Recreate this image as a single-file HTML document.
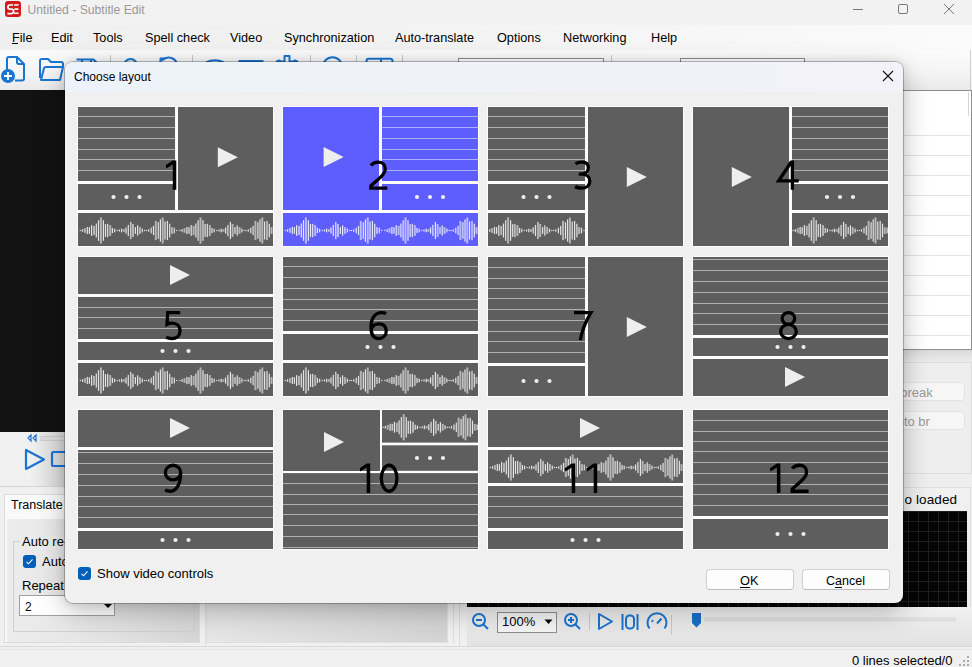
<!DOCTYPE html>
<html><head><meta charset="utf-8">
<style>
*{margin:0;padding:0;box-sizing:border-box}
html,body{width:972px;height:667px;overflow:hidden;background:#f0f0f0;font-family:"Liberation Sans",sans-serif;color:#000}
.a{position:absolute}
.t{position:absolute;white-space:nowrap;font-size:12px;line-height:14px}
.cell{position:absolute;width:197px;height:141px}
.cell svg{position:absolute;left:0;top:0;display:block}
.num{position:absolute;left:0;top:0;width:197px;height:141px;line-height:141px;text-align:center;font-size:41px;color:#000}
.sep{position:absolute;width:1px;background:#c8c8c8}
</style></head><body>
<!-- title bar -->
<div class="a" style="left:0;top:0;width:972px;height:25px;background:#f2f2f2"></div>
<svg class="a" style="left:5px;top:1px" width="16" height="16"><rect x="0" y="0" width="16" height="16" rx="3" fill="#d01c1f"/><path d="M8 4H5a2.1 2.1 0 0 0 0 4.2h1.4a2.2 2.2 0 0 1 0 4.4H2.4" fill="none" stroke="#fff" stroke-width="1.7"/><path d="M8.6 3.2h5.4l-0.8 1.6H9.4zM9.4 7.3h4v1.6h-4zM9.4 11.4h3.8l0.8 1.6H8.6z" fill="#fff"/></svg>
<div class="t" style="left:27.5px;top:3px;color:#999;font-size:12.2px">Untitled - Subtitle Edit</div>
<div class="a" style="left:853px;top:9px;width:10px;height:1px;background:#777"></div>
<div class="a" style="left:898px;top:4px;width:10px;height:10px;border:1px solid #777;border-radius:2px"></div>
<svg class="a" style="left:943px;top:3px" width="12" height="12"><path d="M1 1L11 11M11 1L1 11" stroke="#777" stroke-width="1"/></svg>

<!-- menu bar -->
<div class="a" style="left:0;top:25px;width:972px;height:25px;background:linear-gradient(90deg,#efefef,#f2f2f2 40%,#f7f7f7 75%,#fbfbfb)"></div>
<div class="t" style="left:12px;top:31px;font-size:12.7px">File</div>
<div class="a" style="left:12px;top:43px;width:6px;height:1px;background:#000"></div>
<div class="t" style="left:51px;top:31px;font-size:12.7px">Edit</div>
<div class="t" style="left:93px;top:31px;font-size:12.7px">Tools</div>
<div class="t" style="left:145px;top:31px;font-size:12.7px">Spell check</div>
<div class="t" style="left:230px;top:31px;font-size:12.7px">Video</div>
<div class="t" style="left:284px;top:31px;font-size:12.7px">Synchronization</div>
<div class="t" style="left:395px;top:31px;font-size:12.7px">Auto-translate</div>
<div class="t" style="left:497px;top:31px;font-size:12.7px">Options</div>
<div class="t" style="left:563px;top:31px;font-size:12.7px">Networking</div>
<div class="t" style="left:651px;top:31px;font-size:12.7px">Help</div>

<!-- toolbar -->
<div class="a" style="left:0;top:50px;width:972px;height:40px;background:linear-gradient(#fbfbfb,#f4f4f4 60%,#e9e9e9)"></div>
<svg class="a" style="left:0;top:50px" width="460" height="40">
 <g fill="none" stroke="#1a74d2" stroke-width="2" stroke-linejoin="round">
  <path d="M7 22V9a2 2 0 0 1 2-2h8l7 7v14.5a2 2 0 0 1-2 2h-7"/><path d="M17 7v5a2 2 0 0 0 2 2h5"/>
  <path d="M40 28V11a2 2 0 0 1 2-2h6l3 3h10a2 2 0 0 1 2 2v3"/><path d="M41 30l3-12a2 2 0 0 1 2-1h17l-3 13z"/>
  <path d="M76.5 9.5h17l3.5 3.5M82 9.5v4M91 9.5v4"/>
  <circle cx="130.6" cy="15.5" r="6.5"/>
  <path d="M160.5 13V8.5H166M162 10.5a9 9 0 0 1 15 3"/>
  <path d="M206 12.5a20 20 0 0 1 18 0"/>
  <path d="M238.5 11h25"/>
  <path d="M276 12l3-1.5 2 1h3.5v-5.5h5v5.5h3.5l2-1 3 1.5"/>
  <circle cx="332.5" cy="16.8" r="9.6"/>
  <path d="M366.5 14v-3a2.2 2.2 0 0 1 2.2-2.2h21.6a2.2 2.2 0 0 1 2.2 2.2v3M381 9v5"/>
 </g>
 <circle cx="8" cy="26" r="7" fill="#1a74d2"/>
 <path d="M8 22v8M4 26h8" stroke="#fff" stroke-width="1.8"/>
</svg>
<div class="sep" style="left:110px;top:55px;height:30px"></div>
<div class="sep" style="left:192px;top:55px;height:30px"></div>
<div class="sep" style="left:310px;top:55px;height:30px"></div>
<div class="sep" style="left:356px;top:55px;height:30px"></div>
<div class="sep" style="left:402px;top:55px;height:30px"></div>
<div class="a" style="left:458px;top:58px;width:146px;height:22px;border:1px solid #8a8a8a;background:#fff"></div>
<div class="sep" style="left:611px;top:55px;height:30px"></div>
<div class="a" style="left:680px;top:58px;width:125px;height:22px;border:1px solid #8a8a8a;background:#fff"></div>

<div class="a" style="left:970px;top:50px;width:1px;height:40px;background:#d0d0d0"></div>
<!-- video panel -->
<div class="a" style="left:0;top:90px;width:470px;height:342px;background:#121212"></div>
<!-- right subtitle list -->
<div class="a" style="left:470px;top:90px;width:501.5px;height:260px;background:linear-gradient(90deg,#eaeaea,#fff 40%,#fff);border:1px solid #8e8e8e;border-right:1.5px solid #8e8e8e"></div>
<div class="a" style="left:470px;top:135px;width:500px;height:214px;background:repeating-linear-gradient(#e3e3e3 0,#e3e3e3 1px,transparent 1px,transparent 20px)"></div>
<div class="a" style="left:968px;top:92px;width:1px;height:24px;background:#d6d6d6"></div>

<!-- right edit area -->
<div class="a" style="left:470px;top:350px;width:502px;height:12px;background:linear-gradient(#d9d9d9,#ececec)"></div>
<div class="a" style="left:470px;top:362px;width:502px;height:125px;background:#eeeeee"></div>
<div class="a" style="left:470px;top:362px;width:502px;height:112px;border:1px solid #dcdcdc"></div>
<div class="a" style="left:880px;top:382px;width:85px;height:19px;background:#f6f6f6;border:1px solid #e3e3e3;border-radius:4px"></div>
<div class="t" style="left:872px;top:386px;color:#9a9a9a;font-size:13px">Line break</div>
<div class="a" style="left:880px;top:411px;width:85px;height:19px;background:#f6f6f6;border:1px solid #e3e3e3;border-radius:4px"></div>
<div class="t" style="left:888px;top:415px;color:#9a9a9a;font-size:13px">Auto br</div>

<!-- left controls under video -->
<div class="a" style="left:0;top:432px;width:470px;height:55px;background:linear-gradient(90deg,#f0f0f0,#f0f0f0 30px,#d8d8d8 62px)"></div>
<svg class="a" style="left:0;top:431px" width="70" height="56">
 <path d="M31 4l-3 3 3 3zM36 4l-3 3 3 3z" fill="none" stroke="#1a74d2" stroke-width="1.2"/>
 <rect x="41" y="5.5" width="40" height="4" fill="#dcdcdc" stroke="#bbb" stroke-width="0.6"/>
 <path d="M26 19v19l18-9.5z" fill="none" stroke="#1a74d2" stroke-width="2.2" stroke-linejoin="round"/>
 <rect x="52" y="21" width="14" height="14" rx="1.5" fill="none" stroke="#1a74d2" stroke-width="2.2"/>
</svg>
<div class="a" style="left:0;top:486px;width:470px;height:1px;background:#d5d5d5"></div>

<!-- tab -->
<div class="a" style="left:0;top:487px;width:205px;height:160px;background:#f0f0f0"></div>
<div class="a" style="left:4px;top:494px;width:196px;height:26px;background:#fafafa;border:1px solid #dcdcdc;border-bottom:none"></div>
<div class="t" style="left:11px;top:498px;font-size:12.5px">Translate</div>
<div class="a" style="left:4px;top:519px;width:196px;height:124px;background:#fafafa;border:1px solid #dcdcdc;border-top:none"></div>
<div class="a" style="left:7px;top:519px;width:192px;height:123px;background:linear-gradient(90deg,#ececec,#e6e6e6 40%,#d6d6d6)"></div>
<div class="a" style="left:13px;top:541px;width:182px;height:91px;border:1px solid #d0d0d0"></div>
<div class="t" style="left:20px;top:535px;background:#ebebeb;padding:0 2px;font-size:13px">Auto re-translate</div>
<div class="a" style="left:23px;top:555px;width:13px;height:13px;background:#005fb8;border-radius:3px"></div>
<svg class="a" style="left:23px;top:555px" width="13" height="13"><path d="M3.5 6.8l2 2 4-4.5" fill="none" stroke="#fff" stroke-width="1.1"/></svg>
<div class="t" style="left:42px;top:555px;font-size:13px">Auto translate</div>
<div class="t" style="left:22px;top:579px;font-size:13px">Repeat</div>
<div class="a" style="left:19px;top:595px;width:96px;height:21px;background:#fff;border:1px solid #a0a0a0"></div>
<div class="t" style="left:25px;top:600px">2</div>
<svg class="a" style="left:103px;top:603px" width="10" height="6"><path d="M1 1h8l-4 4z" fill="#000"/></svg>
<div class="a" style="left:205px;top:487px;width:262px;height:160px;background:#f0f0f0;border-left:1px solid #dedede"></div>
<div class="a" style="left:206px;top:520px;width:242px;height:123px;background:linear-gradient(90deg,#e6e6e6,#d4d4d4);border:1px solid #e0e0e0"></div>
<div class="a" style="left:453px;top:487px;width:1px;height:156px;background:#dcdcdc"></div>
<div class="a" style="left:459px;top:487px;width:1px;height:160px;background:#dcdcdc"></div>

<!-- waveform area -->
<div class="a" style="left:467px;top:487px;width:505px;height:24px;background:#f0f0f0"></div>
<div class="a" style="left:470px;top:487px;width:501px;height:120px;border:1px solid #dedede;border-bottom:none"></div>
<div class="t" style="left:904.5px;top:493px;font-size:13.5px;letter-spacing:0.1px">o loaded</div>
<div class="a" style="left:467px;top:511px;width:500px;height:96px;background-color:#050505;background-image:linear-gradient(90deg,#1e1e1e 1px,transparent 1px),linear-gradient(#1e1e1e 1px,transparent 1px);background-size:10px 10px;background-position:1px 0px"></div>
<div class="a" style="left:467px;top:607px;width:505px;height:40px;background:linear-gradient(#f0f0f0,#e2e2e2)"></div>
<svg class="a" style="left:467px;top:607px" width="505" height="40">
 <g fill="none" stroke="#1a74d2" stroke-width="2">
  <circle cx="12" cy="13" r="6"/><path d="M16.5 17.5l4.5 4.5M9 13h6"/>
  <circle cx="104" cy="13" r="6"/><path d="M108.5 17.5l4.5 4.5M101 13h6M104 10v6"/>
  <path d="M132 7v15l13-7.5z" stroke-linejoin="round"/>
  <path d="M155.5 7v16M170.5 7v16"/><rect x="159" y="8.5" width="8" height="13" rx="3.5"/>
  <path d="M182.5 21.5a9.5 9.5 0 1 1 15 0M190 16.5l4.5-5M184.5 13.5l1.8 0.8"/>
 </g>
 <rect x="122" y="6" width="1" height="17" fill="#c8c8c8"/>
 <rect x="204" y="8" width="1" height="20" fill="#c8c8c8"/>
 <path d="M225 6h9v10l-4.5 4.5-4.5-4.5z" fill="#1a6fc8"/>
 <rect x="238" y="11" width="250" height="3" fill="#e0e0e0" stroke="#cfcfcf" stroke-width="0.6"/>
</svg>
<div class="a" style="left:497px;top:612px;width:60px;height:21px;background:#f4f4f4;border:1px solid #8e8e8e"></div>
<div class="t" style="left:502px;top:615px;font-size:13px">100%</div>
<svg class="a" style="left:544px;top:619px" width="9" height="6"><path d="M0.5 0.5h8l-4 4.5z" fill="#000"/></svg>

<!-- bottom lines & status bar -->
<div class="a" style="left:0;top:646px;width:972px;height:1px;background:#d9d9d9"></div>
<div class="a" style="left:0;top:649px;width:972px;height:18px;background:#f0f0f0;border-top:1px solid #e2e2e2"></div>
<div class="t" style="left:852px;top:654px;font-size:13px">0 lines selected/0</div>
<svg class="a" style="left:958px;top:655px" width="12" height="12"><g fill="#aaa"><rect x="9" y="1" width="2" height="2"/><rect x="9" y="5" width="2" height="2"/><rect x="9" y="9" width="2" height="2"/><rect x="5" y="5" width="2" height="2"/><rect x="5" y="9" width="2" height="2"/><rect x="1" y="9" width="2" height="2"/></g></svg>

<!-- dialog -->
<div class="a" style="left:65px;top:62px;width:838px;height:541px;border-radius:8px;box-shadow:0 8px 28px rgba(0,0,0,0.26),0 0 10px rgba(0,0,0,0.10),0 0 0 1px rgba(0,0,0,0.24);background:#f0f0f0;overflow:hidden">
  <div class="a" style="left:0;top:0;width:838px;height:30px;background:linear-gradient(90deg,#edf3fa,#f0f2f8 60%,#f2f2f8)"></div>
</div>
<div class="t" style="left:74px;top:70px;font-size:12px">Choose layout</div>
<svg class="a" style="left:882px;top:70px" width="12" height="12"><path d="M1 1L11 11M11 1L1 11" stroke="#111" stroke-width="1.1"/></svg>

<div class="cell" style="left:77px;top:106px"><svg width="197" height="141" viewBox="-1 -1 197 141"><rect x="-1" y="-1" width="197" height="141" fill="#fcfcfc"/><rect x="0" y="0" width="97" height="74" fill="#5e5e5e"/><rect x="0" y="9" width="97" height="1" fill="#b0b0b0"/><rect x="0" y="20" width="97" height="1" fill="#b0b0b0"/><rect x="0" y="31" width="97" height="1" fill="#b0b0b0"/><rect x="0" y="42" width="97" height="1" fill="#b0b0b0"/><rect x="0" y="52" width="97" height="1" fill="#b0b0b0"/><rect x="0" y="63" width="97" height="1" fill="#b0b0b0"/><rect x="0" y="77" width="97" height="26" fill="#5e5e5e"/><circle cx="35.5" cy="90.0" r="2.1" fill="#eeeeee"/><circle cx="48.5" cy="90.0" r="2.1" fill="#eeeeee"/><circle cx="61.5" cy="90.0" r="2.1" fill="#eeeeee"/><rect x="100" y="0" width="95" height="103" fill="#5e5e5e"/><polygon points="139.8,40.2 159.8,50.2 139.8,60.2" fill="#eeeeee"/><rect x="0" y="106" width="195" height="33" fill="#5e5e5e"/><rect x="1.70" y="122.90" width="1.2" height="1.20" fill="#e4e4e4"/><rect x="3.90" y="122.20" width="1.2" height="2.60" fill="#e4e4e4"/><rect x="5.90" y="121.20" width="2" height="4.60" fill="#b4b4b4"/><rect x="8.70" y="119.90" width="1.2" height="7.20" fill="#e4e4e4"/><rect x="10.80" y="120.20" width="1.2" height="6.60" fill="#e4e4e4"/><rect x="13.00" y="118.10" width="1.2" height="10.80" fill="#e4e4e4"/><rect x="15.00" y="118.90" width="2" height="9.20" fill="#b4b4b4"/><rect x="17.70" y="116.50" width="1.2" height="14.00" fill="#e4e4e4"/><rect x="19.90" y="113.20" width="1.2" height="20.60" fill="#e4e4e4"/><rect x="21.90" y="110.40" width="2" height="26.20" fill="#b4b4b4"/><rect x="24.80" y="113.20" width="1.2" height="20.60" fill="#e4e4e4"/><rect x="26.90" y="117.10" width="1.2" height="12.80" fill="#e4e4e4"/><rect x="29.10" y="116.80" width="1.2" height="13.40" fill="#e4e4e4"/><rect x="31.20" y="118.10" width="2" height="10.80" fill="#b4b4b4"/><rect x="33.80" y="120.90" width="1.2" height="5.20" fill="#e4e4e4"/><rect x="36.00" y="121.70" width="1.2" height="3.60" fill="#e4e4e4"/><rect x="38.50" y="122.90" width="1.2" height="1.20" fill="#e4e4e4"/><rect x="40.80" y="122.50" width="1.2" height="2.00" fill="#e4e4e4"/><rect x="43.00" y="121.70" width="1.2" height="3.60" fill="#e4e4e4"/><rect x="44.80" y="122.20" width="2" height="2.60" fill="#b4b4b4"/><rect x="47.40" y="120.40" width="1.2" height="6.20" fill="#e4e4e4"/><rect x="49.70" y="117.90" width="1.2" height="11.20" fill="#e4e4e4"/><rect x="52.20" y="114.90" width="1.2" height="17.20" fill="#e4e4e4"/><rect x="54.00" y="117.00" width="2" height="13.00" fill="#b4b4b4"/><rect x="56.80" y="120.10" width="1.2" height="6.80" fill="#e4e4e4"/><rect x="59.00" y="118.30" width="1.2" height="10.40" fill="#e4e4e4"/><rect x="60.90" y="120.10" width="2" height="6.80" fill="#b4b4b4"/><rect x="63.70" y="121.60" width="1.2" height="3.80" fill="#e4e4e4"/><rect x="66.00" y="122.90" width="1.2" height="1.20" fill="#e4e4e4"/><rect x="67.90" y="122.90" width="1.2" height="1.20" fill="#e4e4e4"/><rect x="70.10" y="122.30" width="1.2" height="2.40" fill="#e4e4e4"/><rect x="72.60" y="120.70" width="1.2" height="5.60" fill="#e4e4e4"/><rect x="74.90" y="118.90" width="1.2" height="9.20" fill="#e4e4e4"/><rect x="76.80" y="113.90" width="2" height="19.20" fill="#b4b4b4"/><rect x="79.70" y="115.20" width="1.2" height="16.60" fill="#e4e4e4"/><rect x="81.80" y="112.40" width="1.2" height="22.20" fill="#e4e4e4"/><rect x="83.70" y="110.50" width="2" height="26.00" fill="#b4b4b4"/><rect x="86.40" y="114.50" width="1.2" height="18.00" fill="#e4e4e4"/><rect x="88.80" y="113.90" width="1.2" height="19.20" fill="#e4e4e4"/><rect x="91.10" y="116.70" width="1.2" height="13.60" fill="#e4e4e4"/><rect x="92.90" y="120.10" width="2" height="6.80" fill="#b4b4b4"/><rect x="95.70" y="120.70" width="1.2" height="5.60" fill="#e4e4e4"/><rect x="98.20" y="122.90" width="1.2" height="1.20" fill="#e4e4e4"/><rect x="101.30" y="122.90" width="1.2" height="1.20" fill="#e4e4e4"/><rect x="103.50" y="122.20" width="1.2" height="2.60" fill="#e4e4e4"/><rect x="105.50" y="121.20" width="2" height="4.60" fill="#b4b4b4"/><rect x="108.30" y="119.90" width="1.2" height="7.20" fill="#e4e4e4"/><rect x="110.40" y="120.20" width="1.2" height="6.60" fill="#e4e4e4"/><rect x="112.60" y="118.10" width="1.2" height="10.80" fill="#e4e4e4"/><rect x="114.60" y="118.90" width="2" height="9.20" fill="#b4b4b4"/><rect x="117.30" y="116.50" width="1.2" height="14.00" fill="#e4e4e4"/><rect x="119.50" y="113.20" width="1.2" height="20.60" fill="#e4e4e4"/><rect x="121.50" y="110.40" width="2" height="26.20" fill="#b4b4b4"/><rect x="124.40" y="113.20" width="1.2" height="20.60" fill="#e4e4e4"/><rect x="126.50" y="117.10" width="1.2" height="12.80" fill="#e4e4e4"/><rect x="128.70" y="116.80" width="1.2" height="13.40" fill="#e4e4e4"/><rect x="130.80" y="118.10" width="2" height="10.80" fill="#b4b4b4"/><rect x="133.40" y="120.90" width="1.2" height="5.20" fill="#e4e4e4"/><rect x="135.60" y="121.70" width="1.2" height="3.60" fill="#e4e4e4"/><rect x="138.10" y="122.90" width="1.2" height="1.20" fill="#e4e4e4"/><rect x="140.40" y="122.50" width="1.2" height="2.00" fill="#e4e4e4"/><rect x="142.60" y="121.70" width="1.2" height="3.60" fill="#e4e4e4"/><rect x="144.40" y="122.20" width="2" height="2.60" fill="#b4b4b4"/><rect x="147.00" y="120.40" width="1.2" height="6.20" fill="#e4e4e4"/><rect x="149.30" y="117.90" width="1.2" height="11.20" fill="#e4e4e4"/><rect x="151.80" y="114.90" width="1.2" height="17.20" fill="#e4e4e4"/><rect x="153.60" y="117.00" width="2" height="13.00" fill="#b4b4b4"/><rect x="156.40" y="120.10" width="1.2" height="6.80" fill="#e4e4e4"/><rect x="158.60" y="118.30" width="1.2" height="10.40" fill="#e4e4e4"/><rect x="160.50" y="120.10" width="2" height="6.80" fill="#b4b4b4"/><rect x="163.30" y="121.60" width="1.2" height="3.80" fill="#e4e4e4"/><rect x="165.60" y="122.90" width="1.2" height="1.20" fill="#e4e4e4"/><rect x="167.50" y="122.90" width="1.2" height="1.20" fill="#e4e4e4"/><rect x="169.70" y="122.30" width="1.2" height="2.40" fill="#e4e4e4"/><rect x="172.20" y="120.70" width="1.2" height="5.60" fill="#e4e4e4"/><rect x="174.50" y="118.90" width="1.2" height="9.20" fill="#e4e4e4"/><rect x="176.40" y="113.90" width="2" height="19.20" fill="#b4b4b4"/><rect x="179.30" y="115.20" width="1.2" height="16.60" fill="#e4e4e4"/><rect x="181.40" y="112.40" width="1.2" height="22.20" fill="#e4e4e4"/><rect x="183.30" y="110.50" width="2" height="26.00" fill="#b4b4b4"/><rect x="186.00" y="114.50" width="1.2" height="18.00" fill="#e4e4e4"/><rect x="188.40" y="113.90" width="1.2" height="19.20" fill="#e4e4e4"/><rect x="190.70" y="116.70" width="1.2" height="13.60" fill="#e4e4e4"/><rect x="192.50" y="120.10" width="2" height="6.80" fill="#b4b4b4"/></svg></div>
<div class="cell" style="left:282px;top:106px"><svg width="197" height="141" viewBox="-1 -1 197 141"><rect x="-1" y="-1" width="197" height="141" fill="#fcfcfc"/><rect x="0" y="0" width="96" height="103" fill="#5e5eff"/><polygon points="40.6,40.0 60.6,50.0 40.6,60.0" fill="#eeeeee"/><rect x="99" y="0" width="96" height="74" fill="#5e5eff"/><rect x="99" y="9" width="96" height="1" fill="#adadff"/><rect x="99" y="20" width="96" height="1" fill="#adadff"/><rect x="99" y="31" width="96" height="1" fill="#adadff"/><rect x="99" y="42" width="96" height="1" fill="#adadff"/><rect x="99" y="52" width="96" height="1" fill="#adadff"/><rect x="99" y="63" width="96" height="1" fill="#adadff"/><rect x="99" y="77" width="96" height="26" fill="#5e5eff"/><circle cx="134.0" cy="90.0" r="2.1" fill="#eeeeee"/><circle cx="147.0" cy="90.0" r="2.1" fill="#eeeeee"/><circle cx="160.0" cy="90.0" r="2.1" fill="#eeeeee"/><rect x="0" y="106" width="195" height="33" fill="#5e5eff"/><rect x="1.70" y="122.90" width="1.2" height="1.20" fill="#e6e6ff"/><rect x="3.90" y="122.20" width="1.2" height="2.60" fill="#e6e6ff"/><rect x="5.90" y="121.20" width="2" height="4.60" fill="#b9b9ff"/><rect x="8.70" y="119.90" width="1.2" height="7.20" fill="#e6e6ff"/><rect x="10.80" y="120.20" width="1.2" height="6.60" fill="#e6e6ff"/><rect x="13.00" y="118.10" width="1.2" height="10.80" fill="#e6e6ff"/><rect x="15.00" y="118.90" width="2" height="9.20" fill="#b9b9ff"/><rect x="17.70" y="116.50" width="1.2" height="14.00" fill="#e6e6ff"/><rect x="19.90" y="113.20" width="1.2" height="20.60" fill="#e6e6ff"/><rect x="21.90" y="110.40" width="2" height="26.20" fill="#b9b9ff"/><rect x="24.80" y="113.20" width="1.2" height="20.60" fill="#e6e6ff"/><rect x="26.90" y="117.10" width="1.2" height="12.80" fill="#e6e6ff"/><rect x="29.10" y="116.80" width="1.2" height="13.40" fill="#e6e6ff"/><rect x="31.20" y="118.10" width="2" height="10.80" fill="#b9b9ff"/><rect x="33.80" y="120.90" width="1.2" height="5.20" fill="#e6e6ff"/><rect x="36.00" y="121.70" width="1.2" height="3.60" fill="#e6e6ff"/><rect x="38.50" y="122.90" width="1.2" height="1.20" fill="#e6e6ff"/><rect x="40.80" y="122.50" width="1.2" height="2.00" fill="#e6e6ff"/><rect x="43.00" y="121.70" width="1.2" height="3.60" fill="#e6e6ff"/><rect x="44.80" y="122.20" width="2" height="2.60" fill="#b9b9ff"/><rect x="47.40" y="120.40" width="1.2" height="6.20" fill="#e6e6ff"/><rect x="49.70" y="117.90" width="1.2" height="11.20" fill="#e6e6ff"/><rect x="52.20" y="114.90" width="1.2" height="17.20" fill="#e6e6ff"/><rect x="54.00" y="117.00" width="2" height="13.00" fill="#b9b9ff"/><rect x="56.80" y="120.10" width="1.2" height="6.80" fill="#e6e6ff"/><rect x="59.00" y="118.30" width="1.2" height="10.40" fill="#e6e6ff"/><rect x="60.90" y="120.10" width="2" height="6.80" fill="#b9b9ff"/><rect x="63.70" y="121.60" width="1.2" height="3.80" fill="#e6e6ff"/><rect x="66.00" y="122.90" width="1.2" height="1.20" fill="#e6e6ff"/><rect x="67.90" y="122.90" width="1.2" height="1.20" fill="#e6e6ff"/><rect x="70.10" y="122.30" width="1.2" height="2.40" fill="#e6e6ff"/><rect x="72.60" y="120.70" width="1.2" height="5.60" fill="#e6e6ff"/><rect x="74.90" y="118.90" width="1.2" height="9.20" fill="#e6e6ff"/><rect x="76.80" y="113.90" width="2" height="19.20" fill="#b9b9ff"/><rect x="79.70" y="115.20" width="1.2" height="16.60" fill="#e6e6ff"/><rect x="81.80" y="112.40" width="1.2" height="22.20" fill="#e6e6ff"/><rect x="83.70" y="110.50" width="2" height="26.00" fill="#b9b9ff"/><rect x="86.40" y="114.50" width="1.2" height="18.00" fill="#e6e6ff"/><rect x="88.80" y="113.90" width="1.2" height="19.20" fill="#e6e6ff"/><rect x="91.10" y="116.70" width="1.2" height="13.60" fill="#e6e6ff"/><rect x="92.90" y="120.10" width="2" height="6.80" fill="#b9b9ff"/><rect x="95.70" y="120.70" width="1.2" height="5.60" fill="#e6e6ff"/><rect x="98.20" y="122.90" width="1.2" height="1.20" fill="#e6e6ff"/><rect x="101.30" y="122.90" width="1.2" height="1.20" fill="#e6e6ff"/><rect x="103.50" y="122.20" width="1.2" height="2.60" fill="#e6e6ff"/><rect x="105.50" y="121.20" width="2" height="4.60" fill="#b9b9ff"/><rect x="108.30" y="119.90" width="1.2" height="7.20" fill="#e6e6ff"/><rect x="110.40" y="120.20" width="1.2" height="6.60" fill="#e6e6ff"/><rect x="112.60" y="118.10" width="1.2" height="10.80" fill="#e6e6ff"/><rect x="114.60" y="118.90" width="2" height="9.20" fill="#b9b9ff"/><rect x="117.30" y="116.50" width="1.2" height="14.00" fill="#e6e6ff"/><rect x="119.50" y="113.20" width="1.2" height="20.60" fill="#e6e6ff"/><rect x="121.50" y="110.40" width="2" height="26.20" fill="#b9b9ff"/><rect x="124.40" y="113.20" width="1.2" height="20.60" fill="#e6e6ff"/><rect x="126.50" y="117.10" width="1.2" height="12.80" fill="#e6e6ff"/><rect x="128.70" y="116.80" width="1.2" height="13.40" fill="#e6e6ff"/><rect x="130.80" y="118.10" width="2" height="10.80" fill="#b9b9ff"/><rect x="133.40" y="120.90" width="1.2" height="5.20" fill="#e6e6ff"/><rect x="135.60" y="121.70" width="1.2" height="3.60" fill="#e6e6ff"/><rect x="138.10" y="122.90" width="1.2" height="1.20" fill="#e6e6ff"/><rect x="140.40" y="122.50" width="1.2" height="2.00" fill="#e6e6ff"/><rect x="142.60" y="121.70" width="1.2" height="3.60" fill="#e6e6ff"/><rect x="144.40" y="122.20" width="2" height="2.60" fill="#b9b9ff"/><rect x="147.00" y="120.40" width="1.2" height="6.20" fill="#e6e6ff"/><rect x="149.30" y="117.90" width="1.2" height="11.20" fill="#e6e6ff"/><rect x="151.80" y="114.90" width="1.2" height="17.20" fill="#e6e6ff"/><rect x="153.60" y="117.00" width="2" height="13.00" fill="#b9b9ff"/><rect x="156.40" y="120.10" width="1.2" height="6.80" fill="#e6e6ff"/><rect x="158.60" y="118.30" width="1.2" height="10.40" fill="#e6e6ff"/><rect x="160.50" y="120.10" width="2" height="6.80" fill="#b9b9ff"/><rect x="163.30" y="121.60" width="1.2" height="3.80" fill="#e6e6ff"/><rect x="165.60" y="122.90" width="1.2" height="1.20" fill="#e6e6ff"/><rect x="167.50" y="122.90" width="1.2" height="1.20" fill="#e6e6ff"/><rect x="169.70" y="122.30" width="1.2" height="2.40" fill="#e6e6ff"/><rect x="172.20" y="120.70" width="1.2" height="5.60" fill="#e6e6ff"/><rect x="174.50" y="118.90" width="1.2" height="9.20" fill="#e6e6ff"/><rect x="176.40" y="113.90" width="2" height="19.20" fill="#b9b9ff"/><rect x="179.30" y="115.20" width="1.2" height="16.60" fill="#e6e6ff"/><rect x="181.40" y="112.40" width="1.2" height="22.20" fill="#e6e6ff"/><rect x="183.30" y="110.50" width="2" height="26.00" fill="#b9b9ff"/><rect x="186.00" y="114.50" width="1.2" height="18.00" fill="#e6e6ff"/><rect x="188.40" y="113.90" width="1.2" height="19.20" fill="#e6e6ff"/><rect x="190.70" y="116.70" width="1.2" height="13.60" fill="#e6e6ff"/><rect x="192.50" y="120.10" width="2" height="6.80" fill="#b9b9ff"/></svg></div>
<div class="cell" style="left:487px;top:106px"><svg width="197" height="141" viewBox="-1 -1 197 141"><rect x="-1" y="-1" width="197" height="141" fill="#fcfcfc"/><rect x="0" y="0" width="97" height="74" fill="#5e5e5e"/><rect x="0" y="9" width="97" height="1" fill="#b0b0b0"/><rect x="0" y="20" width="97" height="1" fill="#b0b0b0"/><rect x="0" y="31" width="97" height="1" fill="#b0b0b0"/><rect x="0" y="42" width="97" height="1" fill="#b0b0b0"/><rect x="0" y="52" width="97" height="1" fill="#b0b0b0"/><rect x="0" y="63" width="97" height="1" fill="#b0b0b0"/><rect x="0" y="77" width="97" height="26" fill="#5e5e5e"/><circle cx="35.5" cy="90.0" r="2.1" fill="#eeeeee"/><circle cx="48.5" cy="90.0" r="2.1" fill="#eeeeee"/><circle cx="61.5" cy="90.0" r="2.1" fill="#eeeeee"/><rect x="0" y="106" width="97" height="33" fill="#5e5e5e"/><rect x="1.10" y="122.20" width="1.2" height="2.60" fill="#e4e4e4"/><rect x="3.10" y="121.20" width="2" height="4.60" fill="#b4b4b4"/><rect x="5.90" y="119.90" width="1.2" height="7.20" fill="#e4e4e4"/><rect x="8.00" y="120.20" width="1.2" height="6.60" fill="#e4e4e4"/><rect x="10.20" y="118.10" width="1.2" height="10.80" fill="#e4e4e4"/><rect x="12.20" y="118.90" width="2" height="9.20" fill="#b4b4b4"/><rect x="14.90" y="116.50" width="1.2" height="14.00" fill="#e4e4e4"/><rect x="17.10" y="113.20" width="1.2" height="20.60" fill="#e4e4e4"/><rect x="19.10" y="110.40" width="2" height="26.20" fill="#b4b4b4"/><rect x="22.00" y="113.20" width="1.2" height="20.60" fill="#e4e4e4"/><rect x="24.10" y="117.10" width="1.2" height="12.80" fill="#e4e4e4"/><rect x="26.30" y="116.80" width="1.2" height="13.40" fill="#e4e4e4"/><rect x="28.40" y="118.10" width="2" height="10.80" fill="#b4b4b4"/><rect x="31.00" y="120.90" width="1.2" height="5.20" fill="#e4e4e4"/><rect x="33.20" y="121.70" width="1.2" height="3.60" fill="#e4e4e4"/><rect x="35.70" y="122.90" width="1.2" height="1.20" fill="#e4e4e4"/><rect x="38.00" y="122.50" width="1.2" height="2.00" fill="#e4e4e4"/><rect x="40.20" y="121.70" width="1.2" height="3.60" fill="#e4e4e4"/><rect x="42.00" y="122.20" width="2" height="2.60" fill="#b4b4b4"/><rect x="44.60" y="120.40" width="1.2" height="6.20" fill="#e4e4e4"/><rect x="46.90" y="117.90" width="1.2" height="11.20" fill="#e4e4e4"/><rect x="49.40" y="114.90" width="1.2" height="17.20" fill="#e4e4e4"/><rect x="51.20" y="117.00" width="2" height="13.00" fill="#b4b4b4"/><rect x="54.00" y="120.10" width="1.2" height="6.80" fill="#e4e4e4"/><rect x="56.20" y="118.30" width="1.2" height="10.40" fill="#e4e4e4"/><rect x="58.10" y="120.10" width="2" height="6.80" fill="#b4b4b4"/><rect x="60.90" y="121.60" width="1.2" height="3.80" fill="#e4e4e4"/><rect x="63.20" y="122.90" width="1.2" height="1.20" fill="#e4e4e4"/><rect x="65.10" y="122.90" width="1.2" height="1.20" fill="#e4e4e4"/><rect x="67.30" y="122.30" width="1.2" height="2.40" fill="#e4e4e4"/><rect x="69.80" y="120.70" width="1.2" height="5.60" fill="#e4e4e4"/><rect x="72.10" y="118.90" width="1.2" height="9.20" fill="#e4e4e4"/><rect x="74.00" y="113.90" width="2" height="19.20" fill="#b4b4b4"/><rect x="76.90" y="115.20" width="1.2" height="16.60" fill="#e4e4e4"/><rect x="79.00" y="112.40" width="1.2" height="22.20" fill="#e4e4e4"/><rect x="80.90" y="110.50" width="2" height="26.00" fill="#b4b4b4"/><rect x="83.60" y="114.50" width="1.2" height="18.00" fill="#e4e4e4"/><rect x="86.00" y="113.90" width="1.2" height="19.20" fill="#e4e4e4"/><rect x="88.30" y="116.70" width="1.2" height="13.60" fill="#e4e4e4"/><rect x="90.10" y="120.10" width="2" height="6.80" fill="#b4b4b4"/><rect x="92.90" y="120.70" width="1.2" height="5.60" fill="#e4e4e4"/><rect x="95.40" y="122.90" width="1.2" height="1.20" fill="#e4e4e4"/><rect x="100" y="0" width="95" height="139" fill="#5e5e5e"/><polygon points="138.8,60.0 158.8,70.0 138.8,80.0" fill="#eeeeee"/></svg></div>
<div class="cell" style="left:692px;top:106px"><svg width="197" height="141" viewBox="-1 -1 197 141"><rect x="-1" y="-1" width="197" height="141" fill="#fcfcfc"/><rect x="0" y="0" width="96" height="139" fill="#5e5e5e"/><polygon points="38.8,60.0 58.8,70.0 38.8,80.0" fill="#eeeeee"/><rect x="99" y="0" width="96" height="74" fill="#5e5e5e"/><rect x="99" y="9" width="96" height="1" fill="#b0b0b0"/><rect x="99" y="20" width="96" height="1" fill="#b0b0b0"/><rect x="99" y="31" width="96" height="1" fill="#b0b0b0"/><rect x="99" y="42" width="96" height="1" fill="#b0b0b0"/><rect x="99" y="52" width="96" height="1" fill="#b0b0b0"/><rect x="99" y="63" width="96" height="1" fill="#b0b0b0"/><rect x="99" y="77" width="96" height="26" fill="#5e5e5e"/><circle cx="134.0" cy="90.0" r="2.1" fill="#eeeeee"/><circle cx="147.0" cy="90.0" r="2.1" fill="#eeeeee"/><circle cx="160.0" cy="90.0" r="2.1" fill="#eeeeee"/><rect x="99" y="106" width="96" height="33" fill="#5e5e5e"/><rect x="99.50" y="122.90" width="1.2" height="1.20" fill="#e4e4e4"/><rect x="101.70" y="122.20" width="1.2" height="2.60" fill="#e4e4e4"/><rect x="103.70" y="121.20" width="2" height="4.60" fill="#b4b4b4"/><rect x="106.50" y="119.90" width="1.2" height="7.20" fill="#e4e4e4"/><rect x="108.60" y="120.20" width="1.2" height="6.60" fill="#e4e4e4"/><rect x="110.80" y="118.10" width="1.2" height="10.80" fill="#e4e4e4"/><rect x="112.80" y="118.90" width="2" height="9.20" fill="#b4b4b4"/><rect x="115.50" y="116.50" width="1.2" height="14.00" fill="#e4e4e4"/><rect x="117.70" y="113.20" width="1.2" height="20.60" fill="#e4e4e4"/><rect x="119.70" y="110.40" width="2" height="26.20" fill="#b4b4b4"/><rect x="122.60" y="113.20" width="1.2" height="20.60" fill="#e4e4e4"/><rect x="124.70" y="117.10" width="1.2" height="12.80" fill="#e4e4e4"/><rect x="126.90" y="116.80" width="1.2" height="13.40" fill="#e4e4e4"/><rect x="129.00" y="118.10" width="2" height="10.80" fill="#b4b4b4"/><rect x="131.60" y="120.90" width="1.2" height="5.20" fill="#e4e4e4"/><rect x="133.80" y="121.70" width="1.2" height="3.60" fill="#e4e4e4"/><rect x="136.30" y="122.90" width="1.2" height="1.20" fill="#e4e4e4"/><rect x="138.60" y="122.50" width="1.2" height="2.00" fill="#e4e4e4"/><rect x="140.80" y="121.70" width="1.2" height="3.60" fill="#e4e4e4"/><rect x="142.60" y="122.20" width="2" height="2.60" fill="#b4b4b4"/><rect x="145.20" y="120.40" width="1.2" height="6.20" fill="#e4e4e4"/><rect x="147.50" y="117.90" width="1.2" height="11.20" fill="#e4e4e4"/><rect x="150.00" y="114.90" width="1.2" height="17.20" fill="#e4e4e4"/><rect x="151.80" y="117.00" width="2" height="13.00" fill="#b4b4b4"/><rect x="154.60" y="120.10" width="1.2" height="6.80" fill="#e4e4e4"/><rect x="156.80" y="118.30" width="1.2" height="10.40" fill="#e4e4e4"/><rect x="158.70" y="120.10" width="2" height="6.80" fill="#b4b4b4"/><rect x="161.50" y="121.60" width="1.2" height="3.80" fill="#e4e4e4"/><rect x="163.80" y="122.90" width="1.2" height="1.20" fill="#e4e4e4"/><rect x="165.70" y="122.90" width="1.2" height="1.20" fill="#e4e4e4"/><rect x="167.90" y="122.30" width="1.2" height="2.40" fill="#e4e4e4"/><rect x="170.40" y="120.70" width="1.2" height="5.60" fill="#e4e4e4"/><rect x="172.70" y="118.90" width="1.2" height="9.20" fill="#e4e4e4"/><rect x="174.60" y="113.90" width="2" height="19.20" fill="#b4b4b4"/><rect x="177.50" y="115.20" width="1.2" height="16.60" fill="#e4e4e4"/><rect x="179.60" y="112.40" width="1.2" height="22.20" fill="#e4e4e4"/><rect x="181.50" y="110.50" width="2" height="26.00" fill="#b4b4b4"/><rect x="184.20" y="114.50" width="1.2" height="18.00" fill="#e4e4e4"/><rect x="186.60" y="113.90" width="1.2" height="19.20" fill="#e4e4e4"/><rect x="188.90" y="116.70" width="1.2" height="13.60" fill="#e4e4e4"/><rect x="190.70" y="120.10" width="2" height="6.80" fill="#b4b4b4"/><rect x="193.50" y="120.70" width="1.2" height="5.60" fill="#e4e4e4"/></svg></div>
<div class="cell" style="left:77px;top:256px"><svg width="197" height="141" viewBox="-1 -1 197 141"><rect x="-1" y="-1" width="197" height="141" fill="#fcfcfc"/><rect x="0" y="0" width="195" height="37" fill="#5e5e5e"/><polygon points="92.0,7.9 112.0,17.9 92.0,27.9" fill="#eeeeee"/><rect x="0" y="40" width="195" height="42" fill="#5e5e5e"/><rect x="0" y="50" width="195" height="1" fill="#b0b0b0"/><rect x="0" y="60" width="195" height="1" fill="#b0b0b0"/><rect x="0" y="71" width="195" height="1" fill="#b0b0b0"/><rect x="0" y="85" width="195" height="18" fill="#5e5e5e"/><circle cx="84.5" cy="94.0" r="2.1" fill="#eeeeee"/><circle cx="97.5" cy="94.0" r="2.1" fill="#eeeeee"/><circle cx="110.5" cy="94.0" r="2.1" fill="#eeeeee"/><rect x="0" y="106" width="195" height="33" fill="#5e5e5e"/><rect x="1.70" y="122.90" width="1.2" height="1.20" fill="#e4e4e4"/><rect x="3.90" y="122.20" width="1.2" height="2.60" fill="#e4e4e4"/><rect x="5.90" y="121.20" width="2" height="4.60" fill="#b4b4b4"/><rect x="8.70" y="119.90" width="1.2" height="7.20" fill="#e4e4e4"/><rect x="10.80" y="120.20" width="1.2" height="6.60" fill="#e4e4e4"/><rect x="13.00" y="118.10" width="1.2" height="10.80" fill="#e4e4e4"/><rect x="15.00" y="118.90" width="2" height="9.20" fill="#b4b4b4"/><rect x="17.70" y="116.50" width="1.2" height="14.00" fill="#e4e4e4"/><rect x="19.90" y="113.20" width="1.2" height="20.60" fill="#e4e4e4"/><rect x="21.90" y="110.40" width="2" height="26.20" fill="#b4b4b4"/><rect x="24.80" y="113.20" width="1.2" height="20.60" fill="#e4e4e4"/><rect x="26.90" y="117.10" width="1.2" height="12.80" fill="#e4e4e4"/><rect x="29.10" y="116.80" width="1.2" height="13.40" fill="#e4e4e4"/><rect x="31.20" y="118.10" width="2" height="10.80" fill="#b4b4b4"/><rect x="33.80" y="120.90" width="1.2" height="5.20" fill="#e4e4e4"/><rect x="36.00" y="121.70" width="1.2" height="3.60" fill="#e4e4e4"/><rect x="38.50" y="122.90" width="1.2" height="1.20" fill="#e4e4e4"/><rect x="40.80" y="122.50" width="1.2" height="2.00" fill="#e4e4e4"/><rect x="43.00" y="121.70" width="1.2" height="3.60" fill="#e4e4e4"/><rect x="44.80" y="122.20" width="2" height="2.60" fill="#b4b4b4"/><rect x="47.40" y="120.40" width="1.2" height="6.20" fill="#e4e4e4"/><rect x="49.70" y="117.90" width="1.2" height="11.20" fill="#e4e4e4"/><rect x="52.20" y="114.90" width="1.2" height="17.20" fill="#e4e4e4"/><rect x="54.00" y="117.00" width="2" height="13.00" fill="#b4b4b4"/><rect x="56.80" y="120.10" width="1.2" height="6.80" fill="#e4e4e4"/><rect x="59.00" y="118.30" width="1.2" height="10.40" fill="#e4e4e4"/><rect x="60.90" y="120.10" width="2" height="6.80" fill="#b4b4b4"/><rect x="63.70" y="121.60" width="1.2" height="3.80" fill="#e4e4e4"/><rect x="66.00" y="122.90" width="1.2" height="1.20" fill="#e4e4e4"/><rect x="67.90" y="122.90" width="1.2" height="1.20" fill="#e4e4e4"/><rect x="70.10" y="122.30" width="1.2" height="2.40" fill="#e4e4e4"/><rect x="72.60" y="120.70" width="1.2" height="5.60" fill="#e4e4e4"/><rect x="74.90" y="118.90" width="1.2" height="9.20" fill="#e4e4e4"/><rect x="76.80" y="113.90" width="2" height="19.20" fill="#b4b4b4"/><rect x="79.70" y="115.20" width="1.2" height="16.60" fill="#e4e4e4"/><rect x="81.80" y="112.40" width="1.2" height="22.20" fill="#e4e4e4"/><rect x="83.70" y="110.50" width="2" height="26.00" fill="#b4b4b4"/><rect x="86.40" y="114.50" width="1.2" height="18.00" fill="#e4e4e4"/><rect x="88.80" y="113.90" width="1.2" height="19.20" fill="#e4e4e4"/><rect x="91.10" y="116.70" width="1.2" height="13.60" fill="#e4e4e4"/><rect x="92.90" y="120.10" width="2" height="6.80" fill="#b4b4b4"/><rect x="95.70" y="120.70" width="1.2" height="5.60" fill="#e4e4e4"/><rect x="98.20" y="122.90" width="1.2" height="1.20" fill="#e4e4e4"/><rect x="101.30" y="122.90" width="1.2" height="1.20" fill="#e4e4e4"/><rect x="103.50" y="122.20" width="1.2" height="2.60" fill="#e4e4e4"/><rect x="105.50" y="121.20" width="2" height="4.60" fill="#b4b4b4"/><rect x="108.30" y="119.90" width="1.2" height="7.20" fill="#e4e4e4"/><rect x="110.40" y="120.20" width="1.2" height="6.60" fill="#e4e4e4"/><rect x="112.60" y="118.10" width="1.2" height="10.80" fill="#e4e4e4"/><rect x="114.60" y="118.90" width="2" height="9.20" fill="#b4b4b4"/><rect x="117.30" y="116.50" width="1.2" height="14.00" fill="#e4e4e4"/><rect x="119.50" y="113.20" width="1.2" height="20.60" fill="#e4e4e4"/><rect x="121.50" y="110.40" width="2" height="26.20" fill="#b4b4b4"/><rect x="124.40" y="113.20" width="1.2" height="20.60" fill="#e4e4e4"/><rect x="126.50" y="117.10" width="1.2" height="12.80" fill="#e4e4e4"/><rect x="128.70" y="116.80" width="1.2" height="13.40" fill="#e4e4e4"/><rect x="130.80" y="118.10" width="2" height="10.80" fill="#b4b4b4"/><rect x="133.40" y="120.90" width="1.2" height="5.20" fill="#e4e4e4"/><rect x="135.60" y="121.70" width="1.2" height="3.60" fill="#e4e4e4"/><rect x="138.10" y="122.90" width="1.2" height="1.20" fill="#e4e4e4"/><rect x="140.40" y="122.50" width="1.2" height="2.00" fill="#e4e4e4"/><rect x="142.60" y="121.70" width="1.2" height="3.60" fill="#e4e4e4"/><rect x="144.40" y="122.20" width="2" height="2.60" fill="#b4b4b4"/><rect x="147.00" y="120.40" width="1.2" height="6.20" fill="#e4e4e4"/><rect x="149.30" y="117.90" width="1.2" height="11.20" fill="#e4e4e4"/><rect x="151.80" y="114.90" width="1.2" height="17.20" fill="#e4e4e4"/><rect x="153.60" y="117.00" width="2" height="13.00" fill="#b4b4b4"/><rect x="156.40" y="120.10" width="1.2" height="6.80" fill="#e4e4e4"/><rect x="158.60" y="118.30" width="1.2" height="10.40" fill="#e4e4e4"/><rect x="160.50" y="120.10" width="2" height="6.80" fill="#b4b4b4"/><rect x="163.30" y="121.60" width="1.2" height="3.80" fill="#e4e4e4"/><rect x="165.60" y="122.90" width="1.2" height="1.20" fill="#e4e4e4"/><rect x="167.50" y="122.90" width="1.2" height="1.20" fill="#e4e4e4"/><rect x="169.70" y="122.30" width="1.2" height="2.40" fill="#e4e4e4"/><rect x="172.20" y="120.70" width="1.2" height="5.60" fill="#e4e4e4"/><rect x="174.50" y="118.90" width="1.2" height="9.20" fill="#e4e4e4"/><rect x="176.40" y="113.90" width="2" height="19.20" fill="#b4b4b4"/><rect x="179.30" y="115.20" width="1.2" height="16.60" fill="#e4e4e4"/><rect x="181.40" y="112.40" width="1.2" height="22.20" fill="#e4e4e4"/><rect x="183.30" y="110.50" width="2" height="26.00" fill="#b4b4b4"/><rect x="186.00" y="114.50" width="1.2" height="18.00" fill="#e4e4e4"/><rect x="188.40" y="113.90" width="1.2" height="19.20" fill="#e4e4e4"/><rect x="190.70" y="116.70" width="1.2" height="13.60" fill="#e4e4e4"/><rect x="192.50" y="120.10" width="2" height="6.80" fill="#b4b4b4"/></svg></div>
<div class="cell" style="left:282px;top:256px"><svg width="197" height="141" viewBox="-1 -1 197 141"><rect x="-1" y="-1" width="197" height="141" fill="#fcfcfc"/><rect x="0" y="0" width="195" height="74" fill="#5e5e5e"/><rect x="0" y="9" width="195" height="1" fill="#b0b0b0"/><rect x="0" y="20" width="195" height="1" fill="#b0b0b0"/><rect x="0" y="31" width="195" height="1" fill="#b0b0b0"/><rect x="0" y="42" width="195" height="1" fill="#b0b0b0"/><rect x="0" y="52" width="195" height="1" fill="#b0b0b0"/><rect x="0" y="63" width="195" height="1" fill="#b0b0b0"/><rect x="0" y="77" width="195" height="26" fill="#5e5e5e"/><circle cx="84.5" cy="90.0" r="2.1" fill="#eeeeee"/><circle cx="97.5" cy="90.0" r="2.1" fill="#eeeeee"/><circle cx="110.5" cy="90.0" r="2.1" fill="#eeeeee"/><rect x="0" y="106" width="195" height="33" fill="#5e5e5e"/><rect x="1.70" y="122.90" width="1.2" height="1.20" fill="#e4e4e4"/><rect x="3.90" y="122.20" width="1.2" height="2.60" fill="#e4e4e4"/><rect x="5.90" y="121.20" width="2" height="4.60" fill="#b4b4b4"/><rect x="8.70" y="119.90" width="1.2" height="7.20" fill="#e4e4e4"/><rect x="10.80" y="120.20" width="1.2" height="6.60" fill="#e4e4e4"/><rect x="13.00" y="118.10" width="1.2" height="10.80" fill="#e4e4e4"/><rect x="15.00" y="118.90" width="2" height="9.20" fill="#b4b4b4"/><rect x="17.70" y="116.50" width="1.2" height="14.00" fill="#e4e4e4"/><rect x="19.90" y="113.20" width="1.2" height="20.60" fill="#e4e4e4"/><rect x="21.90" y="110.40" width="2" height="26.20" fill="#b4b4b4"/><rect x="24.80" y="113.20" width="1.2" height="20.60" fill="#e4e4e4"/><rect x="26.90" y="117.10" width="1.2" height="12.80" fill="#e4e4e4"/><rect x="29.10" y="116.80" width="1.2" height="13.40" fill="#e4e4e4"/><rect x="31.20" y="118.10" width="2" height="10.80" fill="#b4b4b4"/><rect x="33.80" y="120.90" width="1.2" height="5.20" fill="#e4e4e4"/><rect x="36.00" y="121.70" width="1.2" height="3.60" fill="#e4e4e4"/><rect x="38.50" y="122.90" width="1.2" height="1.20" fill="#e4e4e4"/><rect x="40.80" y="122.50" width="1.2" height="2.00" fill="#e4e4e4"/><rect x="43.00" y="121.70" width="1.2" height="3.60" fill="#e4e4e4"/><rect x="44.80" y="122.20" width="2" height="2.60" fill="#b4b4b4"/><rect x="47.40" y="120.40" width="1.2" height="6.20" fill="#e4e4e4"/><rect x="49.70" y="117.90" width="1.2" height="11.20" fill="#e4e4e4"/><rect x="52.20" y="114.90" width="1.2" height="17.20" fill="#e4e4e4"/><rect x="54.00" y="117.00" width="2" height="13.00" fill="#b4b4b4"/><rect x="56.80" y="120.10" width="1.2" height="6.80" fill="#e4e4e4"/><rect x="59.00" y="118.30" width="1.2" height="10.40" fill="#e4e4e4"/><rect x="60.90" y="120.10" width="2" height="6.80" fill="#b4b4b4"/><rect x="63.70" y="121.60" width="1.2" height="3.80" fill="#e4e4e4"/><rect x="66.00" y="122.90" width="1.2" height="1.20" fill="#e4e4e4"/><rect x="67.90" y="122.90" width="1.2" height="1.20" fill="#e4e4e4"/><rect x="70.10" y="122.30" width="1.2" height="2.40" fill="#e4e4e4"/><rect x="72.60" y="120.70" width="1.2" height="5.60" fill="#e4e4e4"/><rect x="74.90" y="118.90" width="1.2" height="9.20" fill="#e4e4e4"/><rect x="76.80" y="113.90" width="2" height="19.20" fill="#b4b4b4"/><rect x="79.70" y="115.20" width="1.2" height="16.60" fill="#e4e4e4"/><rect x="81.80" y="112.40" width="1.2" height="22.20" fill="#e4e4e4"/><rect x="83.70" y="110.50" width="2" height="26.00" fill="#b4b4b4"/><rect x="86.40" y="114.50" width="1.2" height="18.00" fill="#e4e4e4"/><rect x="88.80" y="113.90" width="1.2" height="19.20" fill="#e4e4e4"/><rect x="91.10" y="116.70" width="1.2" height="13.60" fill="#e4e4e4"/><rect x="92.90" y="120.10" width="2" height="6.80" fill="#b4b4b4"/><rect x="95.70" y="120.70" width="1.2" height="5.60" fill="#e4e4e4"/><rect x="98.20" y="122.90" width="1.2" height="1.20" fill="#e4e4e4"/><rect x="101.30" y="122.90" width="1.2" height="1.20" fill="#e4e4e4"/><rect x="103.50" y="122.20" width="1.2" height="2.60" fill="#e4e4e4"/><rect x="105.50" y="121.20" width="2" height="4.60" fill="#b4b4b4"/><rect x="108.30" y="119.90" width="1.2" height="7.20" fill="#e4e4e4"/><rect x="110.40" y="120.20" width="1.2" height="6.60" fill="#e4e4e4"/><rect x="112.60" y="118.10" width="1.2" height="10.80" fill="#e4e4e4"/><rect x="114.60" y="118.90" width="2" height="9.20" fill="#b4b4b4"/><rect x="117.30" y="116.50" width="1.2" height="14.00" fill="#e4e4e4"/><rect x="119.50" y="113.20" width="1.2" height="20.60" fill="#e4e4e4"/><rect x="121.50" y="110.40" width="2" height="26.20" fill="#b4b4b4"/><rect x="124.40" y="113.20" width="1.2" height="20.60" fill="#e4e4e4"/><rect x="126.50" y="117.10" width="1.2" height="12.80" fill="#e4e4e4"/><rect x="128.70" y="116.80" width="1.2" height="13.40" fill="#e4e4e4"/><rect x="130.80" y="118.10" width="2" height="10.80" fill="#b4b4b4"/><rect x="133.40" y="120.90" width="1.2" height="5.20" fill="#e4e4e4"/><rect x="135.60" y="121.70" width="1.2" height="3.60" fill="#e4e4e4"/><rect x="138.10" y="122.90" width="1.2" height="1.20" fill="#e4e4e4"/><rect x="140.40" y="122.50" width="1.2" height="2.00" fill="#e4e4e4"/><rect x="142.60" y="121.70" width="1.2" height="3.60" fill="#e4e4e4"/><rect x="144.40" y="122.20" width="2" height="2.60" fill="#b4b4b4"/><rect x="147.00" y="120.40" width="1.2" height="6.20" fill="#e4e4e4"/><rect x="149.30" y="117.90" width="1.2" height="11.20" fill="#e4e4e4"/><rect x="151.80" y="114.90" width="1.2" height="17.20" fill="#e4e4e4"/><rect x="153.60" y="117.00" width="2" height="13.00" fill="#b4b4b4"/><rect x="156.40" y="120.10" width="1.2" height="6.80" fill="#e4e4e4"/><rect x="158.60" y="118.30" width="1.2" height="10.40" fill="#e4e4e4"/><rect x="160.50" y="120.10" width="2" height="6.80" fill="#b4b4b4"/><rect x="163.30" y="121.60" width="1.2" height="3.80" fill="#e4e4e4"/><rect x="165.60" y="122.90" width="1.2" height="1.20" fill="#e4e4e4"/><rect x="167.50" y="122.90" width="1.2" height="1.20" fill="#e4e4e4"/><rect x="169.70" y="122.30" width="1.2" height="2.40" fill="#e4e4e4"/><rect x="172.20" y="120.70" width="1.2" height="5.60" fill="#e4e4e4"/><rect x="174.50" y="118.90" width="1.2" height="9.20" fill="#e4e4e4"/><rect x="176.40" y="113.90" width="2" height="19.20" fill="#b4b4b4"/><rect x="179.30" y="115.20" width="1.2" height="16.60" fill="#e4e4e4"/><rect x="181.40" y="112.40" width="1.2" height="22.20" fill="#e4e4e4"/><rect x="183.30" y="110.50" width="2" height="26.00" fill="#b4b4b4"/><rect x="186.00" y="114.50" width="1.2" height="18.00" fill="#e4e4e4"/><rect x="188.40" y="113.90" width="1.2" height="19.20" fill="#e4e4e4"/><rect x="190.70" y="116.70" width="1.2" height="13.60" fill="#e4e4e4"/><rect x="192.50" y="120.10" width="2" height="6.80" fill="#b4b4b4"/></svg></div>
<div class="cell" style="left:487px;top:256px"><svg width="197" height="141" viewBox="-1 -1 197 141"><rect x="-1" y="-1" width="197" height="141" fill="#fcfcfc"/><rect x="0" y="0" width="97" height="106" fill="#5e5e5e"/><rect x="0" y="10" width="97" height="1" fill="#b0b0b0"/><rect x="0" y="21" width="97" height="1" fill="#b0b0b0"/><rect x="0" y="31" width="97" height="1" fill="#b0b0b0"/><rect x="0" y="41" width="97" height="1" fill="#b0b0b0"/><rect x="0" y="52" width="97" height="1" fill="#b0b0b0"/><rect x="0" y="63" width="97" height="1" fill="#b0b0b0"/><rect x="0" y="74" width="97" height="1" fill="#b0b0b0"/><rect x="0" y="84" width="97" height="1" fill="#b0b0b0"/><rect x="0" y="95" width="97" height="1" fill="#b0b0b0"/><rect x="0" y="109" width="97" height="30" fill="#5e5e5e"/><circle cx="35.5" cy="124.0" r="2.1" fill="#eeeeee"/><circle cx="48.5" cy="124.0" r="2.1" fill="#eeeeee"/><circle cx="61.5" cy="124.0" r="2.1" fill="#eeeeee"/><rect x="100" y="0" width="95" height="139" fill="#5e5e5e"/><polygon points="138.8,59.9 158.8,69.9 138.8,79.9" fill="#eeeeee"/></svg></div>
<div class="cell" style="left:692px;top:256px"><svg width="197" height="141" viewBox="-1 -1 197 141"><rect x="-1" y="-1" width="197" height="141" fill="#fcfcfc"/><rect x="0" y="0" width="195" height="78" fill="#5e5e5e"/><rect x="0" y="2" width="195" height="1" fill="#b0b0b0"/><rect x="0" y="13" width="195" height="1" fill="#b0b0b0"/><rect x="0" y="24" width="195" height="1" fill="#b0b0b0"/><rect x="0" y="35" width="195" height="1" fill="#b0b0b0"/><rect x="0" y="46" width="195" height="1" fill="#b0b0b0"/><rect x="0" y="56" width="195" height="1" fill="#b0b0b0"/><rect x="0" y="67" width="195" height="1" fill="#b0b0b0"/><rect x="0" y="81" width="195" height="18" fill="#5e5e5e"/><circle cx="84.5" cy="90.0" r="2.1" fill="#eeeeee"/><circle cx="97.5" cy="90.0" r="2.1" fill="#eeeeee"/><circle cx="110.5" cy="90.0" r="2.1" fill="#eeeeee"/><rect x="0" y="102" width="195" height="37" fill="#5e5e5e"/><polygon points="92.0,110.0 112.0,120.0 92.0,130.0" fill="#eeeeee"/></svg></div>
<div class="cell" style="left:77px;top:409px"><svg width="197" height="141" viewBox="-1 -1 197 141"><rect x="-1" y="-1" width="197" height="141" fill="#fcfcfc"/><rect x="0" y="0" width="195" height="37" fill="#5e5e5e"/><polygon points="92.0,7.9 112.0,17.9 92.0,27.9" fill="#eeeeee"/><rect x="0" y="40" width="195" height="78" fill="#5e5e5e"/><rect x="0" y="42" width="195" height="1" fill="#b0b0b0"/><rect x="0" y="53" width="195" height="1" fill="#b0b0b0"/><rect x="0" y="64" width="195" height="1" fill="#b0b0b0"/><rect x="0" y="75" width="195" height="1" fill="#b0b0b0"/><rect x="0" y="86" width="195" height="1" fill="#b0b0b0"/><rect x="0" y="96" width="195" height="1" fill="#b0b0b0"/><rect x="0" y="107" width="195" height="1" fill="#b0b0b0"/><rect x="0" y="121" width="195" height="18" fill="#5e5e5e"/><circle cx="84.5" cy="130.0" r="2.1" fill="#eeeeee"/><circle cx="97.5" cy="130.0" r="2.1" fill="#eeeeee"/><circle cx="110.5" cy="130.0" r="2.1" fill="#eeeeee"/></svg></div>
<div class="cell" style="left:282px;top:409px"><svg width="197" height="141" viewBox="-1 -1 197 141"><rect x="-1" y="-1" width="197" height="141" fill="#fcfcfc"/><rect x="0" y="0" width="97" height="61" fill="#5e5e5e"/><polygon points="41.0,22.0 61.0,32.0 41.0,42.0" fill="#eeeeee"/><rect x="99" y="0" width="96" height="32.6" fill="#5e5e5e"/><rect x="99.50" y="16.70" width="1.2" height="1.20" fill="#e4e4e4"/><rect x="101.70" y="16.00" width="1.2" height="2.60" fill="#e4e4e4"/><rect x="103.70" y="15.00" width="2" height="4.60" fill="#b4b4b4"/><rect x="106.50" y="13.70" width="1.2" height="7.20" fill="#e4e4e4"/><rect x="108.60" y="14.00" width="1.2" height="6.60" fill="#e4e4e4"/><rect x="110.80" y="11.90" width="1.2" height="10.80" fill="#e4e4e4"/><rect x="112.80" y="12.70" width="2" height="9.20" fill="#b4b4b4"/><rect x="115.50" y="10.30" width="1.2" height="14.00" fill="#e4e4e4"/><rect x="117.70" y="7.00" width="1.2" height="20.60" fill="#e4e4e4"/><rect x="119.70" y="4.20" width="2" height="26.20" fill="#b4b4b4"/><rect x="122.60" y="7.00" width="1.2" height="20.60" fill="#e4e4e4"/><rect x="124.70" y="10.90" width="1.2" height="12.80" fill="#e4e4e4"/><rect x="126.90" y="10.60" width="1.2" height="13.40" fill="#e4e4e4"/><rect x="129.00" y="11.90" width="2" height="10.80" fill="#b4b4b4"/><rect x="131.60" y="14.70" width="1.2" height="5.20" fill="#e4e4e4"/><rect x="133.80" y="15.50" width="1.2" height="3.60" fill="#e4e4e4"/><rect x="136.30" y="16.70" width="1.2" height="1.20" fill="#e4e4e4"/><rect x="138.60" y="16.30" width="1.2" height="2.00" fill="#e4e4e4"/><rect x="140.80" y="15.50" width="1.2" height="3.60" fill="#e4e4e4"/><rect x="142.60" y="16.00" width="2" height="2.60" fill="#b4b4b4"/><rect x="145.20" y="14.20" width="1.2" height="6.20" fill="#e4e4e4"/><rect x="147.50" y="11.70" width="1.2" height="11.20" fill="#e4e4e4"/><rect x="150.00" y="8.70" width="1.2" height="17.20" fill="#e4e4e4"/><rect x="151.80" y="10.80" width="2" height="13.00" fill="#b4b4b4"/><rect x="154.60" y="13.90" width="1.2" height="6.80" fill="#e4e4e4"/><rect x="156.80" y="12.10" width="1.2" height="10.40" fill="#e4e4e4"/><rect x="158.70" y="13.90" width="2" height="6.80" fill="#b4b4b4"/><rect x="161.50" y="15.40" width="1.2" height="3.80" fill="#e4e4e4"/><rect x="163.80" y="16.70" width="1.2" height="1.20" fill="#e4e4e4"/><rect x="165.70" y="16.70" width="1.2" height="1.20" fill="#e4e4e4"/><rect x="167.90" y="16.10" width="1.2" height="2.40" fill="#e4e4e4"/><rect x="170.40" y="14.50" width="1.2" height="5.60" fill="#e4e4e4"/><rect x="172.70" y="12.70" width="1.2" height="9.20" fill="#e4e4e4"/><rect x="174.60" y="7.70" width="2" height="19.20" fill="#b4b4b4"/><rect x="177.50" y="9.00" width="1.2" height="16.60" fill="#e4e4e4"/><rect x="179.60" y="6.20" width="1.2" height="22.20" fill="#e4e4e4"/><rect x="181.50" y="4.30" width="2" height="26.00" fill="#b4b4b4"/><rect x="184.20" y="8.30" width="1.2" height="18.00" fill="#e4e4e4"/><rect x="186.60" y="7.70" width="1.2" height="19.20" fill="#e4e4e4"/><rect x="188.90" y="10.50" width="1.2" height="13.60" fill="#e4e4e4"/><rect x="190.70" y="13.90" width="2" height="6.80" fill="#b4b4b4"/><rect x="193.50" y="14.50" width="1.2" height="5.60" fill="#e4e4e4"/><rect x="99" y="35.3" width="96" height="25.5" fill="#5e5e5e"/><circle cx="134.0" cy="48.0" r="2.1" fill="#eeeeee"/><circle cx="147.0" cy="48.0" r="2.1" fill="#eeeeee"/><circle cx="160.0" cy="48.0" r="2.1" fill="#eeeeee"/><rect x="0" y="63.1" width="195" height="75.9" fill="#5e5e5e"/><rect x="0" y="73" width="195" height="1" fill="#b0b0b0"/><rect x="0" y="84" width="195" height="1" fill="#b0b0b0"/><rect x="0" y="94" width="195" height="1" fill="#b0b0b0"/><rect x="0" y="104" width="195" height="1" fill="#b0b0b0"/><rect x="0" y="115" width="195" height="1" fill="#b0b0b0"/><rect x="0" y="126" width="195" height="1" fill="#b0b0b0"/><rect x="0" y="137" width="195" height="1" fill="#b0b0b0"/></svg></div>
<div class="cell" style="left:487px;top:409px"><svg width="197" height="141" viewBox="-1 -1 197 141"><rect x="-1" y="-1" width="197" height="141" fill="#fcfcfc"/><rect x="0" y="0" width="195" height="37" fill="#5e5e5e"/><polygon points="92.0,8.0 112.0,18.0 92.0,28.0" fill="#eeeeee"/><rect x="0" y="40" width="195" height="33" fill="#5e5e5e"/><rect x="1.70" y="56.90" width="1.2" height="1.20" fill="#e4e4e4"/><rect x="3.90" y="56.20" width="1.2" height="2.60" fill="#e4e4e4"/><rect x="5.90" y="55.20" width="2" height="4.60" fill="#b4b4b4"/><rect x="8.70" y="53.90" width="1.2" height="7.20" fill="#e4e4e4"/><rect x="10.80" y="54.20" width="1.2" height="6.60" fill="#e4e4e4"/><rect x="13.00" y="52.10" width="1.2" height="10.80" fill="#e4e4e4"/><rect x="15.00" y="52.90" width="2" height="9.20" fill="#b4b4b4"/><rect x="17.70" y="50.50" width="1.2" height="14.00" fill="#e4e4e4"/><rect x="19.90" y="47.20" width="1.2" height="20.60" fill="#e4e4e4"/><rect x="21.90" y="44.40" width="2" height="26.20" fill="#b4b4b4"/><rect x="24.80" y="47.20" width="1.2" height="20.60" fill="#e4e4e4"/><rect x="26.90" y="51.10" width="1.2" height="12.80" fill="#e4e4e4"/><rect x="29.10" y="50.80" width="1.2" height="13.40" fill="#e4e4e4"/><rect x="31.20" y="52.10" width="2" height="10.80" fill="#b4b4b4"/><rect x="33.80" y="54.90" width="1.2" height="5.20" fill="#e4e4e4"/><rect x="36.00" y="55.70" width="1.2" height="3.60" fill="#e4e4e4"/><rect x="38.50" y="56.90" width="1.2" height="1.20" fill="#e4e4e4"/><rect x="40.80" y="56.50" width="1.2" height="2.00" fill="#e4e4e4"/><rect x="43.00" y="55.70" width="1.2" height="3.60" fill="#e4e4e4"/><rect x="44.80" y="56.20" width="2" height="2.60" fill="#b4b4b4"/><rect x="47.40" y="54.40" width="1.2" height="6.20" fill="#e4e4e4"/><rect x="49.70" y="51.90" width="1.2" height="11.20" fill="#e4e4e4"/><rect x="52.20" y="48.90" width="1.2" height="17.20" fill="#e4e4e4"/><rect x="54.00" y="51.00" width="2" height="13.00" fill="#b4b4b4"/><rect x="56.80" y="54.10" width="1.2" height="6.80" fill="#e4e4e4"/><rect x="59.00" y="52.30" width="1.2" height="10.40" fill="#e4e4e4"/><rect x="60.90" y="54.10" width="2" height="6.80" fill="#b4b4b4"/><rect x="63.70" y="55.60" width="1.2" height="3.80" fill="#e4e4e4"/><rect x="66.00" y="56.90" width="1.2" height="1.20" fill="#e4e4e4"/><rect x="67.90" y="56.90" width="1.2" height="1.20" fill="#e4e4e4"/><rect x="70.10" y="56.30" width="1.2" height="2.40" fill="#e4e4e4"/><rect x="72.60" y="54.70" width="1.2" height="5.60" fill="#e4e4e4"/><rect x="74.90" y="52.90" width="1.2" height="9.20" fill="#e4e4e4"/><rect x="76.80" y="47.90" width="2" height="19.20" fill="#b4b4b4"/><rect x="79.70" y="49.20" width="1.2" height="16.60" fill="#e4e4e4"/><rect x="81.80" y="46.40" width="1.2" height="22.20" fill="#e4e4e4"/><rect x="83.70" y="44.50" width="2" height="26.00" fill="#b4b4b4"/><rect x="86.40" y="48.50" width="1.2" height="18.00" fill="#e4e4e4"/><rect x="88.80" y="47.90" width="1.2" height="19.20" fill="#e4e4e4"/><rect x="91.10" y="50.70" width="1.2" height="13.60" fill="#e4e4e4"/><rect x="92.90" y="54.10" width="2" height="6.80" fill="#b4b4b4"/><rect x="95.70" y="54.70" width="1.2" height="5.60" fill="#e4e4e4"/><rect x="98.20" y="56.90" width="1.2" height="1.20" fill="#e4e4e4"/><rect x="101.30" y="56.90" width="1.2" height="1.20" fill="#e4e4e4"/><rect x="103.50" y="56.20" width="1.2" height="2.60" fill="#e4e4e4"/><rect x="105.50" y="55.20" width="2" height="4.60" fill="#b4b4b4"/><rect x="108.30" y="53.90" width="1.2" height="7.20" fill="#e4e4e4"/><rect x="110.40" y="54.20" width="1.2" height="6.60" fill="#e4e4e4"/><rect x="112.60" y="52.10" width="1.2" height="10.80" fill="#e4e4e4"/><rect x="114.60" y="52.90" width="2" height="9.20" fill="#b4b4b4"/><rect x="117.30" y="50.50" width="1.2" height="14.00" fill="#e4e4e4"/><rect x="119.50" y="47.20" width="1.2" height="20.60" fill="#e4e4e4"/><rect x="121.50" y="44.40" width="2" height="26.20" fill="#b4b4b4"/><rect x="124.40" y="47.20" width="1.2" height="20.60" fill="#e4e4e4"/><rect x="126.50" y="51.10" width="1.2" height="12.80" fill="#e4e4e4"/><rect x="128.70" y="50.80" width="1.2" height="13.40" fill="#e4e4e4"/><rect x="130.80" y="52.10" width="2" height="10.80" fill="#b4b4b4"/><rect x="133.40" y="54.90" width="1.2" height="5.20" fill="#e4e4e4"/><rect x="135.60" y="55.70" width="1.2" height="3.60" fill="#e4e4e4"/><rect x="138.10" y="56.90" width="1.2" height="1.20" fill="#e4e4e4"/><rect x="140.40" y="56.50" width="1.2" height="2.00" fill="#e4e4e4"/><rect x="142.60" y="55.70" width="1.2" height="3.60" fill="#e4e4e4"/><rect x="144.40" y="56.20" width="2" height="2.60" fill="#b4b4b4"/><rect x="147.00" y="54.40" width="1.2" height="6.20" fill="#e4e4e4"/><rect x="149.30" y="51.90" width="1.2" height="11.20" fill="#e4e4e4"/><rect x="151.80" y="48.90" width="1.2" height="17.20" fill="#e4e4e4"/><rect x="153.60" y="51.00" width="2" height="13.00" fill="#b4b4b4"/><rect x="156.40" y="54.10" width="1.2" height="6.80" fill="#e4e4e4"/><rect x="158.60" y="52.30" width="1.2" height="10.40" fill="#e4e4e4"/><rect x="160.50" y="54.10" width="2" height="6.80" fill="#b4b4b4"/><rect x="163.30" y="55.60" width="1.2" height="3.80" fill="#e4e4e4"/><rect x="165.60" y="56.90" width="1.2" height="1.20" fill="#e4e4e4"/><rect x="167.50" y="56.90" width="1.2" height="1.20" fill="#e4e4e4"/><rect x="169.70" y="56.30" width="1.2" height="2.40" fill="#e4e4e4"/><rect x="172.20" y="54.70" width="1.2" height="5.60" fill="#e4e4e4"/><rect x="174.50" y="52.90" width="1.2" height="9.20" fill="#e4e4e4"/><rect x="176.40" y="47.90" width="2" height="19.20" fill="#b4b4b4"/><rect x="179.30" y="49.20" width="1.2" height="16.60" fill="#e4e4e4"/><rect x="181.40" y="46.40" width="1.2" height="22.20" fill="#e4e4e4"/><rect x="183.30" y="44.50" width="2" height="26.00" fill="#b4b4b4"/><rect x="186.00" y="48.50" width="1.2" height="18.00" fill="#e4e4e4"/><rect x="188.40" y="47.90" width="1.2" height="19.20" fill="#e4e4e4"/><rect x="190.70" y="50.70" width="1.2" height="13.60" fill="#e4e4e4"/><rect x="192.50" y="54.10" width="2" height="6.80" fill="#b4b4b4"/><rect x="0" y="76" width="195" height="42" fill="#5e5e5e"/><rect x="0" y="86" width="195" height="1" fill="#b0b0b0"/><rect x="0" y="96" width="195" height="1" fill="#b0b0b0"/><rect x="0" y="107" width="195" height="1" fill="#b0b0b0"/><rect x="0" y="121" width="195" height="18" fill="#5e5e5e"/><circle cx="84.5" cy="130.0" r="2.1" fill="#eeeeee"/><circle cx="97.5" cy="130.0" r="2.1" fill="#eeeeee"/><circle cx="110.5" cy="130.0" r="2.1" fill="#eeeeee"/></svg></div>
<div class="cell" style="left:692px;top:409px"><svg width="197" height="141" viewBox="-1 -1 197 141"><rect x="-1" y="-1" width="197" height="141" fill="#fcfcfc"/><rect x="0" y="0" width="195" height="106" fill="#5e5e5e"/><rect x="0" y="10" width="195" height="1" fill="#b0b0b0"/><rect x="0" y="21" width="195" height="1" fill="#b0b0b0"/><rect x="0" y="31" width="195" height="1" fill="#b0b0b0"/><rect x="0" y="41" width="195" height="1" fill="#b0b0b0"/><rect x="0" y="52" width="195" height="1" fill="#b0b0b0"/><rect x="0" y="63" width="195" height="1" fill="#b0b0b0"/><rect x="0" y="74" width="195" height="1" fill="#b0b0b0"/><rect x="0" y="84" width="195" height="1" fill="#b0b0b0"/><rect x="0" y="95" width="195" height="1" fill="#b0b0b0"/><rect x="0" y="109" width="195" height="30" fill="#5e5e5e"/><circle cx="84.5" cy="124.0" r="2.1" fill="#eeeeee"/><circle cx="97.5" cy="124.0" r="2.1" fill="#eeeeee"/><circle cx="110.5" cy="124.0" r="2.1" fill="#eeeeee"/></svg></div>
<svg class="a" style="left:0;top:0" width="972" height="667"><g transform="translate(165.9,160.5)"><polygon points="6.9,0 10.4,0 10.4,29.3 6.9,29.3 6.9,4.0 0.3,8.0 0,4.6" fill="#000"/></g><g transform="translate(368.9,160.5)"><path d="M2.0,5.0 C3.8,2.6 6.4,1.65 9.3,1.65 C13.5,1.65 16.4,4.3 16.4,8.3 C16.4,12.4 14.0,14.9 10.0,18.3 L2.0,25.3 L2.0,27.65 L18.4,27.65" fill="none" stroke="#000" stroke-width="3.3" stroke-linejoin="miter"/></g><g transform="translate(574.2,160.5)"><path d="M1.3,3.4 C3.1,2.2 5.4,1.65 8.0,1.65 C11.8,1.65 14.1,3.8 14.1,7.3 C14.1,11.0 11.4,13.6 7.0,13.6 L4.6,13.6 M7.0,13.6 C12.4,13.6 15.65,16.4 15.65,20.4 C15.65,24.9 12.2,27.65 7.4,27.65 C4.9,27.65 2.6,27.1 0.9,26.0" fill="none" stroke="#000" stroke-width="3.3"/></g><g transform="translate(777.0,160.5)"><path d="M15.4,0 L15.4,29.3 M21.7,20.4 L1.6,20.4 L14.6,1.0" fill="none" stroke="#000" stroke-width="3.3" stroke-linejoin="miter"/></g><g transform="translate(165.2,310.9)"><path d="M15.0,1.65 L2.5,1.65 L1.8,13.4 C3.3,12.6 5.0,12.2 6.8,12.2 C11.8,12.2 14.85,15.2 14.85,19.8 C14.85,24.6 11.5,27.65 6.6,27.65 C4.4,27.65 2.4,27.2 0.9,26.4" fill="none" stroke="#000" stroke-width="3.3"/></g><g transform="translate(369.3,310.9)"><path d="M16.8,2.6 C15.4,1.9 13.9,1.65 12.3,1.65 C5.8,1.65 1.65,7.2 1.65,16.2 C1.65,23.9 4.6,27.65 9.3,27.65 C13.8,27.65 16.95,24.5 16.95,20.2 C16.95,15.7 14.2,12.9 9.6,12.9 C5.9,12.9 3.1,15.0 1.9,18.3" fill="none" stroke="#000" stroke-width="3.3"/></g><g transform="translate(574.0,310.9)"><path d="M0,1.65 L16.9,1.65 C12.8,8.5 8.5,17.5 6.3,29.3" fill="none" stroke="#000" stroke-width="3.3"/></g><g transform="translate(779.0,310.9)"><ellipse cx="9.45" cy="7.55" rx="6.3" ry="5.9" fill="none" stroke="#000" stroke-width="3.3"/><ellipse cx="9.45" cy="20.6" rx="7.8" ry="7.05" fill="none" stroke="#000" stroke-width="3.3"/></g><g transform="translate(163.7,463.6)"><ellipse cx="9.3" cy="9.0" rx="7.65" ry="7.35" fill="none" stroke="#000" stroke-width="3.3"/><path d="M16.95,9.0 C16.95,21.0 12.6,27.65 6.6,27.65 C4.6,27.65 3.0,27.2 1.3,26.4" fill="none" stroke="#000" stroke-width="3.3"/></g><g transform="translate(359.8,463.6)"><polygon points="6.9,0 10.4,0 10.4,29.3 6.9,29.3 6.9,4.0 0.3,8.0 0,4.6" fill="#000"/></g><g transform="translate(379.7,463.6)"><ellipse cx="9.45" cy="14.65" rx="7.8" ry="13.0" fill="none" stroke="#000" stroke-width="3.3"/></g><g transform="translate(564.8,463.6)"><polygon points="6.9,0 10.4,0 10.4,29.3 6.9,29.3 6.9,4.0 0.3,8.0 0,4.6" fill="#000"/></g><g transform="translate(586.8,463.6)"><polygon points="6.9,0 10.4,0 10.4,29.3 6.9,29.3 6.9,4.0 0.3,8.0 0,4.6" fill="#000"/></g><g transform="translate(770.0,463.6)"><polygon points="6.9,0 10.4,0 10.4,29.3 6.9,29.3 6.9,4.0 0.3,8.0 0,4.6" fill="#000"/></g><g transform="translate(790.2,463.6)"><path d="M2.0,5.0 C3.8,2.6 6.4,1.65 9.3,1.65 C13.5,1.65 16.4,4.3 16.4,8.3 C16.4,12.4 14.0,14.9 10.0,18.3 L2.0,25.3 L2.0,27.65 L18.4,27.65" fill="none" stroke="#000" stroke-width="3.3" stroke-linejoin="miter"/></g></svg>

<div class="a" style="left:78px;top:567px;width:13px;height:13px;background:#005fb8;border-radius:3px"></div>
<svg class="a" style="left:78px;top:567px" width="13" height="13"><path d="M3.5 6.8l2 2 4-4.5" fill="none" stroke="#fff" stroke-width="1.1"/></svg>
<div class="t" style="left:97px;top:567px;font-size:13px">Show video controls</div>

<div class="a" style="left:706px;top:569px;width:88px;height:21px;background:#fdfdfd;border:1px solid #d0d0d0;border-bottom-color:#bdbdbd;border-radius:4px"></div>
<div class="t" style="left:740px;top:574px;font-size:12.8px">OK</div>
<div class="a" style="left:740px;top:587px;width:10px;height:1px;background:#000"></div>
<div class="a" style="left:802px;top:569px;width:88px;height:21px;background:#fdfdfd;border:1px solid #d0d0d0;border-bottom-color:#bdbdbd;border-radius:4px"></div>
<div class="t" style="left:826px;top:574px;font-size:12.5px">Cancel</div>
<div class="a" style="left:835px;top:587px;width:7px;height:1px;background:#000"></div>
</body></html>
